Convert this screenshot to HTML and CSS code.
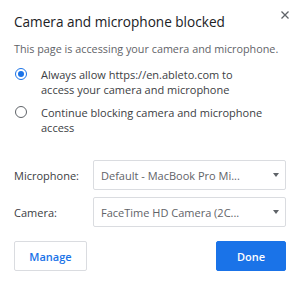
FILE: index.html
```html
<!DOCTYPE html>
<html lang="en">
<head>
  <meta charset="UTF-8" />
  <title>Camera and microphone blocked</title>
  <link rel="stylesheet" href="styles.css">
</head>
<body>
  <div class="dialog">
    <div class="header">
      <h2>Camera and microphone blocked</h2>
      <button class="close-btn" aria-label="Close">
        <svg width="8" height="8" viewBox="0 0 8 8">
          <path d="M0.5 0.5 L7.5 7.5 M7.5 0.5 L0.5 7.5" stroke="#5f6368" stroke-width="1.3" fill="none" />
        </svg>
      </button>
    </div>

    <p class="intro">This page is accessing your camera and microphone.</p>

    <div class="options">
      <label class="option">
        <span class="radio checked"></span>
        <span>Always allow https://en.ableto.com to<br>access your camera and microphone</span>
      </label>
      <label class="option">
        <span class="radio"></span>
        <span>Continue blocking camera and microphone access</span>
      </label>
    </div>

    <div class="devices">
      <span class="device-label">Microphone:</span>
      <div class="select">
        <span>Default - MacBook Pro Mi...</span>
        <span class="caret"></span>
      </div>
      <span class="device-label">Camera:</span>
      <div class="select">
        <span>FaceTime HD Camera (2C...</span>
        <span class="caret"></span>
      </div>
    </div>

    <div class="actions">
      <button class="btn btn-outline">Manage</button>
      <button class="btn btn-primary">Done</button>
    </div>
  </div>
</body>
</html>
```

FILE: styles.css
```css
body {
  margin: 0;
  padding: 0;
  background: #fff;
  font-family: "Open Sans", "Noto Sans", sans-serif;
  color: #3c4043;
}
.dialog {
  width: 300px;
  height: 286px;
  box-sizing: border-box;
  padding: 13px 14px 0 14px;
}
.header {
  display: flex;
  justify-content: space-between;
  align-items: flex-start;
}
h2 {
  margin: 0;
  font-size: 13.6px;
  line-height: 18px;
  font-weight: 400;
  color: #202124;
}
.close-btn {
  margin: -5px -6px 0 0;
  padding: 0;
  width: 14px;
  height: 14px;
  border: none;
  background: transparent;
  display: flex;
  align-items: center;
  justify-content: center;
}
.intro {
  margin: 10px 0 0 0;
  font-size: 10.8px;
  line-height: 15px;
  color: #5f6368;
}
.options {
  margin-top: 11px;
  display: flex;
  flex-direction: column;
  gap: 8px;
}
.option {
  display: flex;
  align-items: flex-start;
  gap: 14px;
  font-size: 11px;
  line-height: 15px;
  color: #3c4043;
}
.radio {
  flex: none;
  width: 12px;
  height: 12px;
  margin: 1px 0 0 1px;
  box-sizing: border-box;
  border: 1.5px solid #5f6368;
  border-radius: 50%;
  position: relative;
}
.radio.checked {
  border-color: #1a73e8;
}
.radio.checked::after {
  content: "";
  position: absolute;
  top: 1.5px;
  left: 1.5px;
  width: 6px;
  height: 6px;
  border-radius: 50%;
  background: #1a73e8;
}
.devices {
  margin-top: 25px;
  display: grid;
  grid-template-columns: 79px 1fr;
  row-gap: 7px;
  align-items: center;
}
.device-label {
  font-size: 11px;
  color: #3c4043;
}
.select {
  height: 30px;
  box-sizing: border-box;
  border: 1px solid #dadce0;
  border-radius: 2px;
  padding: 0 6px 0 7px;
  display: flex;
  align-items: center;
  justify-content: space-between;
  font-size: 11px;
  color: #5f6368;
}
.caret {
  width: 0;
  height: 0;
  border-left: 3.5px solid transparent;
  border-right: 3.5px solid transparent;
  border-top: 4px solid #5f6368;
}
.actions {
  margin-top: 14px;
  display: flex;
  justify-content: space-between;
}
.btn {
  height: 30px;
  padding: 0;
  border-radius: 2px;
  font-family: "Open Sans", "Noto Sans", sans-serif;
  font-size: 11px;
  font-weight: 600;
  cursor: pointer;
}
.btn-outline {
  width: 73px;
  background: #fff;
  border: 1px solid #dadce0;
  color: #1a73e8;
}
.btn-primary {
  width: 70px;
  background: #1a73e8;
  border: 1px solid #1a73e8;
  color: #fff;
}
```
